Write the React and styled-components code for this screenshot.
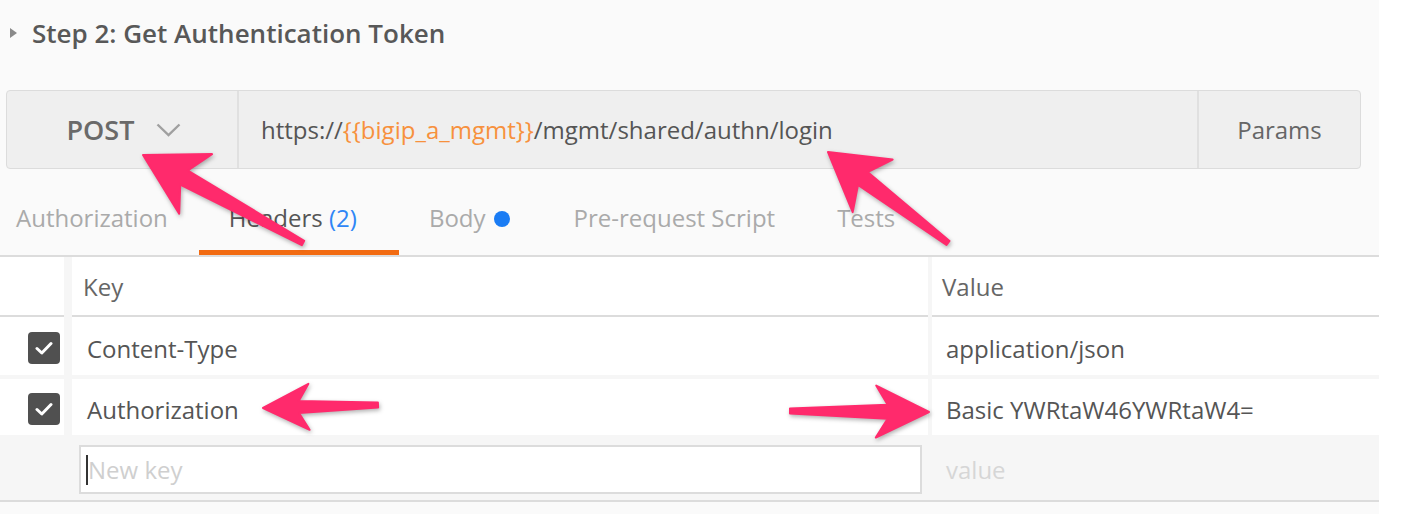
import React from "react";
import styled, { createGlobalStyle } from "styled-components";

const GlobalStyle = createGlobalStyle`
  html, body { margin: 0; padding: 0; background: #ffffff; }
  body { font-family: "Open Sans", "Noto Sans", sans-serif; color: #505050; }
  * { box-sizing: border-box; }
`;

const Page = styled.div`
  position: relative;
  width: 1379px;
  height: 514px;
  background: #fafafa;
  overflow: hidden;
`;

const TitleRow = styled.div`
  height: 66px;
  display: flex;
  align-items: center;
  padding-left: 10px;
  gap: 15px;
`;

const Caret = styled.span`
  width: 0;
  height: 0;
  border-top: 5px solid transparent;
  border-bottom: 5px solid transparent;
  border-left: 7px solid #8a8a8a;
`;

const Title = styled.h2`
  margin: 0;
  font-size: 26px;
  font-weight: 600;
  color: #585858;
  line-height: 34px;
`;

const UrlBar = styled.div`
  margin: 24px 0 0 6px;
  width: 1355px;
  height: 79px;
  display: flex;
  background: #efefef;
  border: 1px solid #dcdcdc;
  border-radius: 4px;
`;

const MethodSelect = styled.div`
  width: 232px;
  display: flex;
  align-items: center;
  justify-content: center;
  gap: 22px;
  border-right: 2px solid #e0e0e0;
  font-size: 27px;
  font-weight: 600;
  color: #6a6a6a;
  padding-left: 4px;
`;

const UrlInput = styled.div`
  flex: 1;
  display: flex;
  align-items: center;
  padding-left: 22px;
  font-size: 24px;
  color: #555;
  border-right: 2px solid #e0e0e0;
`;

const Variable = styled.span`
  color: #f7913d;
`;

const ParamsButton = styled.div`
  width: 161px;
  display: flex;
  align-items: center;
  justify-content: center;
  font-size: 24px;
  color: #666;
`;

const TabBar = styled.div`
  height: 86px;
  display: flex;
  align-items: flex-end;
  padding-left: 16px;
`;

const Tab = styled.div`
  height: 54px;
  padding: 0 ${(p) => p.$pr}px 0 ${(p) => p.$pl}px;
  display: flex;
  align-items: flex-start;
  gap: 8px;
  font-size: 24px;
  line-height: 34px;
  color: ${(p) => (p.$active ? "#555" : "#aaa")};
  border-bottom: 5px solid ${(p) => (p.$active ? "#f26b12" : "transparent")};
`;

const Count = styled.span`
  color: #2f86f6;
`;

const Dot = styled.span`
  width: 16px;
  height: 16px;
  border-radius: 50%;
  background: #1a7cf4;
  margin-top: 10px;
`;

const Table = styled.div`
  border-top: 2px solid #dcdcdc;
  border-bottom: 2px solid #dcdcdc;
  background: #f6f6f6;
  display: grid;
  grid-template-columns: 64px 864px 1fr;
`;

const HeaderCell = styled.div`
  height: 60px;
  background: #fff;
  display: flex;
  align-items: center;
  padding-left: ${(p) => p.$pad || 0}px;
  margin-left: ${(p) => p.$gap || 0}px;
  font-size: 24px;
  color: #666;
  border-bottom: 2px solid #dcdcdc;
`;

const Cell = styled.div`
  height: ${(p) => p.$h}px;
  background: #fff;
  display: flex;
  align-items: center;
  padding-left: ${(p) => p.$pad || 0}px;
  padding-top: 4px;
  margin-left: ${(p) => p.$gap || 0}px;
  margin-bottom: ${(p) => p.$mb || 0}px;
  font-size: 24px;
  color: #555;
`;

const Checkbox = styled.div`
  width: 32px;
  height: 32px;
  border-radius: 4px;
  background: #505050;
  display: flex;
  align-items: center;
  justify-content: center;
  margin-left: 28px;
`;

const NewRowCell = styled.div`
  height: 61px;
  display: flex;
  align-items: center;
  padding-left: ${(p) => p.$pad || 0}px;
`;

const KeyInput = styled.div`
  width: 843px;
  height: 49px;
  background: #fff;
  border: 2px solid #dcdcdc;
  display: flex;
  align-items: center;
  padding-left: 5px;
  font-size: 24px;
  color: #cfcfcf;
`;

const Cursor = styled.span`
  width: 2px;
  height: 30px;
  background: #333;
`;

const Placeholder = styled.span`
  font-size: 24px;
  color: #d6d6d6;
`;

const Overlay = styled.svg`
  position: absolute;
  left: 0;
  top: 0;
  width: 1420px;
  height: 514px;
  pointer-events: none;
  filter: drop-shadow(1px 2px 2px rgba(0, 0, 0, 0.3));
`;

function arrowPath(tail, tip, L, W, w0, w1) {
  const dx = tip[0] - tail[0];
  const dy = tip[1] - tail[1];
  const len = Math.hypot(dx, dy);
  const d = [dx / len, dy / len];
  const n = [-d[1], d[0]];
  const at = (dist, off) => [
    tip[0] - d[0] * dist + n[0] * off,
    tip[1] - d[1] * dist + n[1] * off,
  ];
  const pts = [
    [tail[0] + n[0] * w0 / 2, tail[1] + n[1] * w0 / 2],
    at(L * 0.78, w1 / 2),
    at(L, W),
    tip,
    at(L, -W),
    at(L * 0.78, -w1 / 2),
    [tail[0] - n[0] * w0 / 2, tail[1] - n[1] * w0 / 2],
  ];
  return "M" + pts.map((p) => p[0].toFixed(1) + " " + p[1].toFixed(1)).join(" L") + " Z";
}

const arrows = [
  { tail: [303, 243], tip: [143, 155], L: 60, W: 34, w0: 5, w1: 16 },
  { tail: [948, 243], tip: [828, 152], L: 56, W: 33, w0: 5, w1: 16 },
  { tail: [378, 405], tip: [263, 408], L: 46, W: 23, w0: 5, w1: 12 },
  { tail: [790, 411], tip: [929, 412], L: 53, W: 26, w0: 5, w1: 14 },
];

const Check = () => (
  <svg width="18" height="14" viewBox="0 0 18 14">
    <path d="M2 7.5 L6.8 12 L16 2.5" fill="none" stroke="#fff" strokeWidth="3" strokeLinecap="round" strokeLinejoin="round" />
  </svg>
);

const Chevron = () => (
  <svg width="25" height="14" viewBox="0 0 25 14">
    <path d="M1.5 1.5 L12.5 12 L23.5 1.5" fill="none" stroke="#a0a0a0" strokeWidth="2.4" />
  </svg>
);

const rows = [
  { key: "Content-Type", value: "application/json", h: 58 },
  { key: "Authorization", value: "Basic YWRtaW46YWRtaW4=", h: 56 },
];

export default function App() {
  return (
    <>
      <GlobalStyle />
      <Page>
        <TitleRow>
          <Caret />
          <Title>Step 2: Get Authentication Token</Title>
        </TitleRow>
        <UrlBar>
          <MethodSelect>
            POST
            <Chevron />
          </MethodSelect>
          <UrlInput>
            https://<Variable>{"{{bigip_a_mgmt}}"}</Variable>/mgmt/shared/authn/login
          </UrlInput>
          <ParamsButton>Params</ParamsButton>
        </UrlBar>
        <TabBar>
          <Tab $pl={0} $pr={31}>Authorization</Tab>
          <Tab $pl={30} $pr={42} $active>
            <span>
              Headers <Count>(2)</Count>
            </span>
          </Tab>
          <Tab $pl={30} $pr={31}>
            Body
            <Dot />
          </Tab>
          <Tab $pl={33} $pr={31}>Pre-request Script</Tab>
          <Tab $pl={31} $pr={30}>Tests</Tab>
        </TabBar>
        <Table>
          <HeaderCell />
          <HeaderCell $gap={8} $pad={11}>Key</HeaderCell>
          <HeaderCell $gap={4} $pad={10}>Value</HeaderCell>
          {rows.map((r) => (
            <React.Fragment key={r.key}>
              <Cell $h={r.h} $mb={4}>
                <Checkbox>
                  <Check />
                </Checkbox>
              </Cell>
              <Cell $h={r.h} $mb={4} $gap={8} $pad={15}>{r.key}</Cell>
              <Cell $h={r.h} $mb={4} $gap={4} $pad={14}>{r.value}</Cell>
            </React.Fragment>
          ))}
          <NewRowCell />
          <NewRowCell $pad={15}>
            <KeyInput>
              <Cursor />
              New key
            </KeyInput>
          </NewRowCell>
          <NewRowCell $pad={18}>
            <Placeholder>value</Placeholder>
          </NewRowCell>
        </Table>
        <Overlay viewBox="0 0 1420 514">
          {arrows.map((a, i) => (
            <path key={i} d={arrowPath(a.tail, a.tip, a.L, a.W, a.w0, a.w1)} fill="#ff2a6c" strokeLinejoin="round" stroke="#ff2a6c" strokeWidth="2" />
          ))}
        </Overlay>
      </Page>
    </>
  );
}
